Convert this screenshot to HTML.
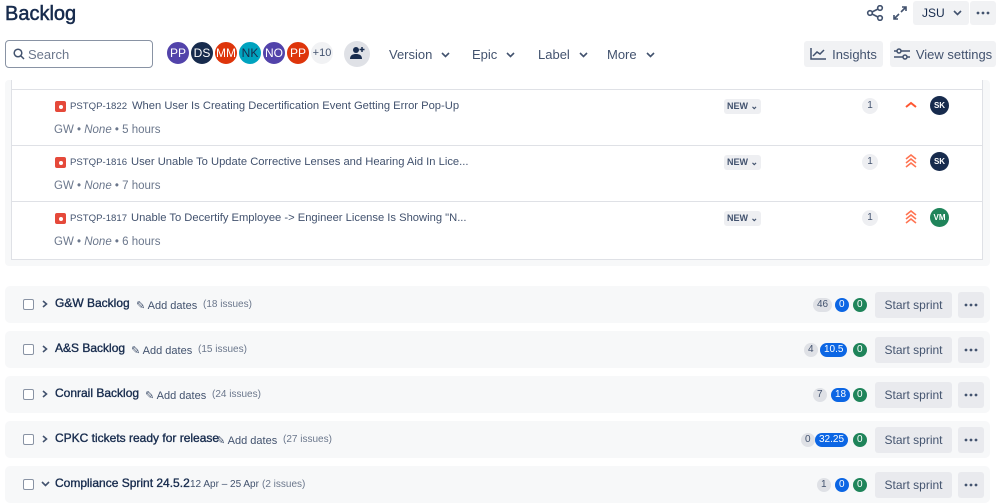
<!DOCTYPE html><html><head><style>
*{box-sizing:border-box;margin:0;padding:0}
body{width:999px;height:491px;overflow:hidden;background:#fff;font-family:"Liberation Sans",sans-serif;color:#172b4d;position:relative}
.a{position:absolute}
.av{position:absolute;width:26px;height:26px;border-radius:50%;color:#fff;font-size:12px;display:flex;align-items:center;justify-content:center;border:2px solid #fff}
.flt{position:absolute;top:47px;font-size:13px;color:#42526e;display:flex;align-items:center}
.cv{width:9px;height:6px;margin-left:9px}
.btn{position:absolute;background:#f1f2f4;border-radius:3px;font-size:13px;color:#42526e;display:flex;align-items:center;justify-content:center}
.row{position:absolute;left:12px;width:970px;height:56px;border-top:1px solid #dfe1e6;background:#fff}
.key{position:absolute;left:58px;top:11px;font-size:9.6px;color:#42526e}
.ttl{position:absolute;top:10px;font-size:11.2px;color:#42526e}
.meta{position:absolute;left:42px;top:34px;font-size:11.5px;color:#6b778c}
.bug{position:absolute;left:43px;top:11px;width:11px;height:11px;background:#e5493a;border-radius:2px}
.bug:after{content:"";position:absolute;left:3.5px;top:3.5px;width:4px;height:4px;border-radius:50%;background:#fff}
.new{position:absolute;left:712px;top:9px;background:#eeeff2;font-size:9px;font-weight:bold;color:#42526e;padding:2px 3px;border-radius:3px}
.one{position:absolute;left:850px;top:8px;width:16px;height:16px;border-radius:8px;background:#eeeff2;font-size:10px;color:#42526e;text-align:center;line-height:16px}
.sk{position:absolute;left:918px;top:6px;width:19px;height:19px;border-radius:50%;color:#fff;font-size:8px;font-weight:bold;display:flex;align-items:center;justify-content:center}
.sp{position:absolute;left:5px;width:985px;height:37px;background:#f7f8f9;border-radius:5px}
.cb{position:absolute;left:18px;top:13px;width:11px;height:11px;border:1.5px solid #8993a4;border-radius:2px;background:#fff}
.chev{position:absolute;left:37px;top:14px;width:6px;height:8px}
.nm{position:absolute;left:50px;top:10px;font-size:12px;color:#172b4d;-webkit-text-stroke:0.35px #172b4d}
.ad{position:absolute;top:13px;font-size:11px;color:#42526e}
.iss{position:absolute;top:13px;font-size:10px;color:#6b778c}
.cnt{position:absolute;top:12px;height:14px;border-radius:7px;font-size:10px;text-align:center;line-height:14px;padding:0 4px}
.g{background:#dfe1e6;color:#42526e}.b{background:#0c66e4;color:#fff}.gr{background:#1f845a;color:#fff}
.ss{position:absolute;left:870px;top:6px;width:77px;height:26px;background:#e9eaee;border-radius:3px;font-size:12px;color:#44546f;text-align:center;line-height:26px}
.dt{position:absolute;left:953px;top:6px;width:26px;height:26px;background:#e9eaee;border-radius:3px;display:flex;align-items:center;justify-content:center}
</style></head><body>
<svg width="0" height="0" style="position:absolute"><defs>
<symbol id="d" viewBox="0 0 9 6"><path d="M1 1l3.5 3.5L8 1" fill="none" stroke="#42526e" stroke-width="1.6"/></symbol>
<symbol id="r" viewBox="0 0 6 8"><path d="M1 1l3.5 3L1 7" fill="none" stroke="#42526e" stroke-width="1.6"/></symbol>
<symbol id="e" viewBox="0 0 14 4"><circle cx="2" cy="2" r="1.4" fill="#44546f"/><circle cx="7" cy="2" r="1.4" fill="#44546f"/><circle cx="12" cy="2" r="1.4" fill="#44546f"/></symbol>
</defs></svg>
<div class="a" style="left:5px;top:3px;font-size:20px;color:#172b4d;-webkit-text-stroke:0.5px #172b4d">Backlog</div>
<svg class="a" style="left:866px;top:5px" width="18" height="16" viewBox="0 0 18 16" fill="none" stroke="#42526e" stroke-width="1.6"><circle cx="4" cy="8" r="2.3"/><circle cx="14" cy="3" r="2.3"/><circle cx="14" cy="13" r="2.3"/><path d="M6 7L12 4M6 9L12 12"/></svg>
<svg class="a" style="left:892px;top:5px" width="16" height="16" viewBox="0 0 16 16" fill="none" stroke="#42526e" stroke-width="1.6"><path d="M9 7L14 2M10 2h4v4M7 9L2 14M2 10v4h4"/></svg>
<div class="btn" style="left:913px;top:1px;width:56px;height:24px;justify-content:flex-start;padding-left:9px;color:#172b4d;font-size:12px">JSU <svg class="cv" style="margin-left:8px"><use href="#d"/></svg></div>
<div class="btn" style="left:970px;top:1px;width:26px;height:24px"><svg width="14" height="4"><use href="#e"/></svg></div>
<div class="a" style="left:5px;top:40px;width:148px;height:28px;border:1px solid #8993a4;border-radius:4px"></div>
<svg class="a" style="left:13px;top:48px" width="12" height="12" viewBox="0 0 12 12" fill="none" stroke="#42526e" stroke-width="1.5"><circle cx="5" cy="5" r="3.8"/><path d="M8 8l3 3"/></svg>
<div class="a" style="left:28px;top:47px;font-size:13px;color:#6b778c">Search</div>
<div class="av" style="left:165px;top:40px;background:#5243aa">PP</div>
<div class="av" style="left:189px;top:40px;background:#172b4d">DS</div>
<div class="av" style="left:213px;top:40px;background:#de350b">MM</div>
<div class="av" style="left:237px;top:40px;background:#00a3bf;color:#172b4d">NK</div>
<div class="av" style="left:261px;top:40px;background:#5243aa">NO</div>
<div class="av" style="left:285px;top:40px;background:#de350b">PP</div>
<div class="av" style="left:309px;top:40px;background:#f1f2f4;color:#42526e;font-size:11px">+10</div>
<div class="a" style="left:344px;top:41px;width:26px;height:26px;border-radius:50%;background:#dfe1e6"></div>
<svg class="a" style="left:350px;top:46px" width="16" height="14" viewBox="0 0 16 14" fill="#172b4d"><circle cx="6" cy="4" r="3"/><path d="M0 13c0-4 3-5 6-5s6 1 6 5z"/><path d="M12 1v5M9.5 3.5h5" stroke="#172b4d" stroke-width="1.5"/></svg>
<div class="flt" style="left:389px">Version<svg class="cv"><use href="#d"/></svg></div>
<div class="flt" style="left:472px">Epic<svg class="cv"><use href="#d"/></svg></div>
<div class="flt" style="left:538px">Label<svg class="cv"><use href="#d"/></svg></div>
<div class="flt" style="left:607px">More<svg class="cv"><use href="#d"/></svg></div>
<div class="btn" style="left:804px;top:41px;width:79px;height:26px"><svg width="16" height="12" viewBox="0 0 16 12" fill="none" stroke="#42526e" stroke-width="1.5" style="margin-right:6px"><path d="M1 0v11h15M3 8l4-4 3 2 4-4"/></svg>Insights</div>
<div class="btn" style="left:890px;top:41px;width:106px;height:26px"><svg width="16" height="12" viewBox="0 0 16 12" fill="none" stroke="#42526e" stroke-width="1.5" style="margin-right:6px"><path d="M0 3h16M0 9h16"/><circle cx="5" cy="3" r="2" fill="#f1f2f4"/><circle cx="11" cy="9" r="2" fill="#f1f2f4"/></svg>View settings</div>

<div class="a" style="left:5px;top:80px;width:985px;height:186px;background:#f7f8f9;border-radius:4px"></div>
<div class="a" style="left:11px;top:80px;width:972px;height:180px;background:#fff;border:1px solid #dfe1e6;border-top:none"></div>
<div class="row" style="top:89px"><div class="bug"></div><div class="key">PSTQP-1822</div><div class="ttl" style="left:120px">When User Is Creating Decertification Event Getting Error Pop-Up</div><div class="meta">GW • <i>None</i> • 5 hours</div><div class="new">NEW &#8964;</div><div class="one">1</div>
<svg class="a" style="left:893px;top:10px" width="12" height="10" viewBox="0 0 12 10" fill="none" stroke="#ff5630" stroke-width="2"><path d="M1 7l5-4 5 4"/></svg><div class="sk" style="background:#172b4d">SK</div></div>
<div class="row" style="top:145px"><div class="bug"></div><div class="key">PSTQP-1816</div><div class="ttl" style="left:119px">User Unable To Update Corrective Lenses and Hearing Aid In Lice...</div><div class="meta">GW • <i>None</i> • 7 hours</div><div class="new">NEW &#8964;</div><div class="one">1</div>
<svg class="a" style="left:893px;top:8px" width="12" height="14" viewBox="0 0 12 14" fill="none" stroke="#ff7452" stroke-width="1.6"><path d="M1 5l5-4 5 4M1 9l5-4 5 4M1 13l5-4 5 4"/></svg><div class="sk" style="background:#172b4d">SK</div></div>
<div class="row" style="top:201px"><div class="bug"></div><div class="key">PSTQP-1817</div><div class="ttl" style="left:119px">Unable To Decertify Employee -&gt; Engineer License Is Showing "N...</div><div class="meta">GW • <i>None</i> • 6 hours</div><div class="new">NEW &#8964;</div><div class="one">1</div>
<svg class="a" style="left:893px;top:8px" width="12" height="14" viewBox="0 0 12 14" fill="none" stroke="#ff7452" stroke-width="1.6"><path d="M1 5l5-4 5 4M1 9l5-4 5 4M1 13l5-4 5 4"/></svg><div class="sk" style="background:#1f845a">VM</div></div>

<div class="sp" style="top:286px"><div class="cb"></div><svg class="chev"><use href="#r"/></svg><div class="nm">G&amp;W Backlog</div><div class="ad" style="left:131px">✎ Add dates</div><div class="iss" style="left:198px">(18 issues)</div>
<div class="cnt g" style="left:808px">46</div><div class="cnt b" style="left:830px">0</div><div class="cnt gr" style="left:848px">0</div><div class="ss">Start sprint</div><div class="dt"><svg width="14" height="4"><use href="#e"/></svg></div></div>
<div class="sp" style="top:331px"><div class="cb"></div><svg class="chev"><use href="#r"/></svg><div class="nm">A&amp;S Backlog</div><div class="ad" style="left:126px">✎ Add dates</div><div class="iss" style="left:193px">(15 issues)</div>
<div class="cnt g" style="left:799px">4</div><div class="cnt b" style="left:815px">10.5</div><div class="cnt gr" style="left:848px">0</div><div class="ss">Start sprint</div><div class="dt"><svg width="14" height="4"><use href="#e"/></svg></div></div>
<div class="sp" style="top:376px"><div class="cb"></div><svg class="chev"><use href="#r"/></svg><div class="nm">Conrail Backlog</div><div class="ad" style="left:140px">✎ Add dates</div><div class="iss" style="left:207px">(24 issues)</div>
<div class="cnt g" style="left:808px">7</div><div class="cnt b" style="left:826px">18</div><div class="cnt gr" style="left:848px">0</div><div class="ss">Start sprint</div><div class="dt"><svg width="14" height="4"><use href="#e"/></svg></div></div>
<div class="sp" style="top:421px"><div class="cb"></div><svg class="chev"><use href="#r"/></svg><div class="nm">CPKC tickets ready for release</div><div class="ad" style="left:211px">✎ Add dates</div><div class="iss" style="left:278px">(27 issues)</div>
<div class="cnt g" style="left:796px">0</div><div class="cnt b" style="left:810px">32.25</div><div class="cnt gr" style="left:848px">0</div><div class="ss">Start sprint</div><div class="dt"><svg width="14" height="4"><use href="#e"/></svg></div></div>
<div class="sp" style="top:466px"><div class="cb"></div><svg class="chev" style="left:36px;top:15px;width:9px;height:6px"><use href="#d"/></svg><div class="nm">Compliance Sprint 24.5.2</div><div class="iss" style="left:185px;color:#42526e">12 Apr – 25 Apr</div><div class="iss" style="left:257px">(2 issues)</div>
<div class="cnt g" style="left:812px">1</div><div class="cnt b" style="left:830px">0</div><div class="cnt gr" style="left:848px">0</div><div class="ss">Start sprint</div><div class="dt"><svg width="14" height="4"><use href="#e"/></svg></div></div>
</body></html>
